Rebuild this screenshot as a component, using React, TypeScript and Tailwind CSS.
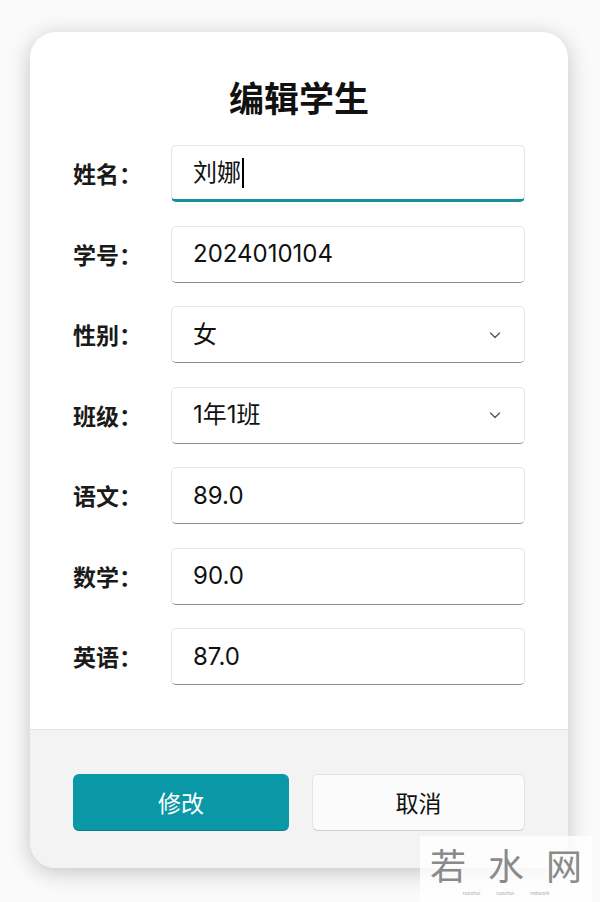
import React from "react";

const font = { fontFamily: '"Noto Sans CJK SC", "Noto Sans", sans-serif' };
const inputFont = { fontFamily: 'Inter, "Noto Sans CJK SC", sans-serif' };

function Chevron() {
  return (
    <svg width="14" height="14" viewBox="0 0 14 14" fill="none">
      <path d="M2.5 5 L7 9.5 L11.5 5" stroke="#555" strokeWidth="1.3" strokeLinecap="round" strokeLinejoin="round" />
    </svg>
  );
}

function Row({ label, value, select, focused }: { label: string; value: string; select?: boolean; focused?: boolean }) {
  return (
    <div className="flex items-center">
      <div className="w-[98px] text-[23px] font-bold text-[#1a1a1a] leading-none">{label}：</div>
      <div
        className={
          "relative flex h-[57px] w-[354px] items-center justify-between rounded-[5px] border border-[#e6e6e6] bg-white pl-[21px] pr-[22px] " +
          (focused ? "border-b-[3px] border-b-[#178e98]" : "border-b-[#8d8d8d]")
        }
      >
        <span className="text-[24px] text-[#111] leading-none flex items-center" style={inputFont}>
          {value}
          {focused && <span className="ml-[1px] inline-block h-[30px] w-[1.5px] bg-black" />}
        </span>
        {select && <Chevron />}
      </div>
    </div>
  );
}

export default function App() {
  return (
    <div className="relative h-[902px] w-[600px] overflow-hidden bg-[#fafafa]" style={font}>
      <div className="pl-[30px] pt-[32px]">
        <div className="w-[538px] h-[836px] overflow-hidden rounded-[26px] bg-white shadow-[0_4px_22px_rgba(0,0,0,0.22)] flex flex-col">
          <div className="flex-1 pl-[43px] pt-[47px]">
            <div className="text-center text-[35px] font-bold leading-none text-[#111] pr-[43px]">编辑学生</div>
            <div className="mt-[31px] flex flex-col gap-[23.5px]">
              <Row label="姓名" value="刘娜" focused />
              <Row label="学号" value="2024010104" />
              <Row label="性别" value="女" select />
              <Row label="班级" value="1年1班" select />
              <Row label="语文" value="89.0" />
              <Row label="数学" value="90.0" />
              <Row label="英语" value="87.0" />
            </div>
          </div>
          <div className="h-[139px] border-t border-[#e4e4e4] bg-[#f3f3f3] pl-[43px] pt-[44px]">
            <div className="flex gap-[23px]">
              <button className="h-[57px] w-[216px] rounded-[6px] bg-[#0b98a6] text-[23px] text-white border-b border-[#0a7f8a]">修改</button>
              <button className="h-[57px] w-[213px] rounded-[6px] bg-[#fbfbfb] text-[23px] text-[#111] border border-[#e3e3e3] border-b-[#cfcfcf]">取消</button>
            </div>
          </div>
        </div>
      </div>
      <div className="absolute left-[420px] top-[836px] flex h-[66px] w-[172px] flex-col items-center bg-white/80 pt-[10px]">
        <div className="whitespace-nowrap text-[36px] leading-none text-[#8a8a8a] tracking-[22px] pl-[22px]">若水网</div>
        <div className="mt-[8px] flex gap-[16px] whitespace-nowrap text-[5px] leading-none text-[#aaa]">
          <span>ruoshui</span><span>ruoshui</span><span>network</span>
        </div>
      </div>
    </div>
  );
}
